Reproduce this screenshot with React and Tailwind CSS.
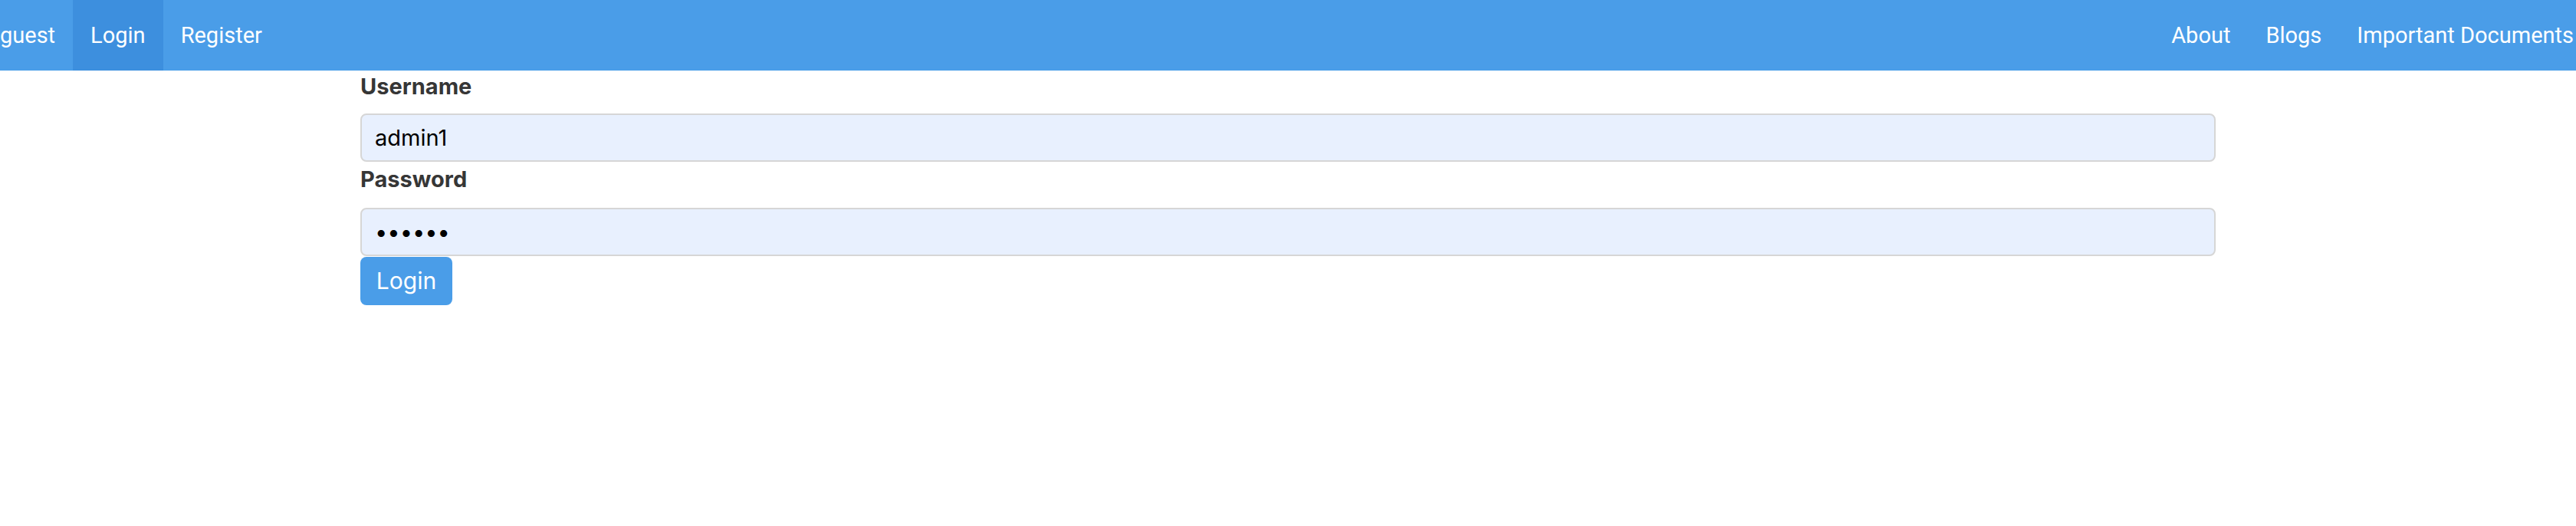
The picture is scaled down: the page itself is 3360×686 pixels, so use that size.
import React from 'react';

const NavItem = ({ children, active, className = '' }) => (
  <a
    href="#"
    className={`flex items-center h-full px-[23px] text-white ${active ? 'bg-[#3d8fde]' : ''} ${className}`}
  >
    {children}
  </a>
);

const App = () => {
  return (
    <div className="min-h-[686px] bg-white overflow-hidden">
      <nav
        className="flex justify-between items-center h-[92px] bg-[#4a9de8] ml-[-23px] mr-[-20px] text-[29px] leading-none"
        style={{ fontFamily: 'Roboto, "Liberation Sans", sans-serif' }}
      >
        <div className="flex h-full">
          <NavItem>guest</NavItem>
          <NavItem active>Login</NavItem>
          <NavItem>Register</NavItem>
        </div>
        <div className="flex h-full">
          <NavItem>About</NavItem>
          <NavItem>Blogs</NavItem>
          <NavItem>Important Documents</NavItem>
        </div>
      </nav>

      <form
        className="w-[2420px] mx-auto flex flex-col items-start text-[29px]"
        style={{ fontFamily: 'Inter, "Noto Sans", sans-serif' }}
        onSubmit={(e) => e.preventDefault()}
      >
        <label className="block font-bold text-[#363636] leading-[42px] mb-[14px]">Username</label>
        <input
          type="text"
          defaultValue="admin1"
          className="w-full h-[63px] px-[17px] bg-[#e8f0fe] border-2 border-[#d6d6d6] rounded-[8px] text-black outline-none"
        />
        <label className="block font-bold text-[#363636] leading-[42px] mt-[2px] mb-[16px]">Password</label>
        <input
          type="password"
          defaultValue="123456"
          className="w-full h-[63px] px-[17px] bg-[#e8f0fe] border-2 border-[#d6d6d6] rounded-[8px] text-black outline-none"
        />
        <button
          type="submit"
          className="w-[120px] h-[63px] mt-[1px] bg-[#4a9de8] text-white rounded-[8px] text-[30px]"
        >
          Login
        </button>
      </form>
    </div>
  );
};

export default App;
